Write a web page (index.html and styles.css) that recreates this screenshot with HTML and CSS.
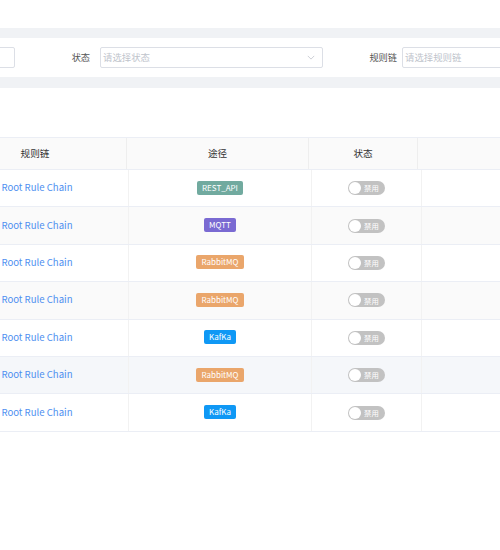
FILE: index.html
```html
<!DOCTYPE html>
<html lang="zh">
<head>
<meta charset="utf-8">
<title>规则链</title>
<link rel="stylesheet" href="styles.css">
</head>
<body>
<div class="page">
  <div class="top-space"></div>
  <div class="band band-a"></div>
  <div class="filters">
    <div class="select select-first"><span class="ph"></span></div>
    <label class="flabel flabel-1">状态</label>
    <div class="select"><span class="ph">请选择状态</span>
      <svg class="chev" viewBox="0 0 10 6" width="8" height="5"><path d="M1 1l4 4 4-4" fill="none" stroke="#c0c4cc" stroke-width="1"/></svg>
    </div>
    <label class="flabel flabel-2">规则链</label>
    <div class="select"><span class="ph">请选择规则链</span></div>
  </div>
  <div class="band band-b"></div>
  <div class="content">
    <div class="table">
      <div class="thead">
        <div class="th">规则链</div>
        <div class="th">途径</div>
        <div class="th">状态</div>
        <div class="th"></div>
      </div>
      <div class="tbody">
        <div class="tr">
          <div class="td"><span class="link">Root Rule Chain</span></div>
          <div class="td"><span class="tag tag-rest">REST_API</span></div>
          <div class="td"><span class="switch"><span class="knob"></span><span class="sw-text">禁用</span></span></div>
          <div class="td"></div>
        </div>
        <div class="tr stripe">
          <div class="td"><span class="link">Root Rule Chain</span></div>
          <div class="td"><span class="tag tag-mqtt">MQTT</span></div>
          <div class="td"><span class="switch"><span class="knob"></span><span class="sw-text">禁用</span></span></div>
          <div class="td"></div>
        </div>
        <div class="tr">
          <div class="td"><span class="link">Root Rule Chain</span></div>
          <div class="td"><span class="tag tag-rabbit">RabbitMQ</span></div>
          <div class="td"><span class="switch"><span class="knob"></span><span class="sw-text">禁用</span></span></div>
          <div class="td"></div>
        </div>
        <div class="tr stripe">
          <div class="td"><span class="link">Root Rule Chain</span></div>
          <div class="td"><span class="tag tag-rabbit">RabbitMQ</span></div>
          <div class="td"><span class="switch"><span class="knob"></span><span class="sw-text">禁用</span></span></div>
          <div class="td"></div>
        </div>
        <div class="tr">
          <div class="td"><span class="link">Root Rule Chain</span></div>
          <div class="td"><span class="tag tag-kafka">KafKa</span></div>
          <div class="td"><span class="switch"><span class="knob"></span><span class="sw-text">禁用</span></span></div>
          <div class="td"></div>
        </div>
        <div class="tr hover">
          <div class="td"><span class="link">Root Rule Chain</span></div>
          <div class="td"><span class="tag tag-rabbit">RabbitMQ</span></div>
          <div class="td"><span class="switch"><span class="knob"></span><span class="sw-text">禁用</span></span></div>
          <div class="td"></div>
        </div>
        <div class="tr">
          <div class="td"><span class="link">Root Rule Chain</span></div>
          <div class="td"><span class="tag tag-kafka">KafKa</span></div>
          <div class="td"><span class="switch"><span class="knob"></span><span class="sw-text">禁用</span></span></div>
          <div class="td"></div>
        </div>
      </div>
    </div>
  </div>
</div>
</body>
</html>
```
FILE: styles.css
```css
html, body {
  margin: 0;
  padding: 0;
  background: #ffffff;
}
body {
  font-family: "Noto Sans CJK SC", "Noto Sans", sans-serif;
  color: #333;
  width: 500px;
  height: 550px;
  overflow: hidden;
}
.page {
  width: 500px;
  overflow: hidden;
}
.top-space {
  height: 28px;
}
.band {
  background: #f0f2f5;
}
.band-a {
  height: 10px;
}
.band-b {
  height: 11px;
}
.filters {
  height: 39px;
  display: flex;
  align-items: center;
  margin-left: -208px;
  width: 900px;
}
.select {
  flex: none;
  width: 223px;
  height: 21px;
  box-sizing: border-box;
  border: 1px solid #dcdfe6;
  border-radius: 2px;
  display: flex;
  align-items: center;
  justify-content: space-between;
  padding: 0 7px 0 2px;
  background: #fff;
}
.ph {
  font-size: 9.4px;
  color: #c0c4cc;
  line-height: 1;
}
.chev {
  display: block;
}
.flabel {
  flex: none;
  box-sizing: border-box;
  text-align: right;
  font-size: 9.2px;
  color: #555;
  line-height: 1;
}
.flabel-1 {
  width: 85px;
  padding-right: 10px;
}
.flabel-2 {
  width: 79px;
  padding-right: 5px;
}
.content {
  padding-top: 49px;
}
.table {
  margin-left: -56px;
  width: 700px;
}
.thead {
  display: grid;
  grid-template-columns: 183px 182px 109px 1fr;
  height: 33px;
  box-sizing: border-box;
  border-top: 1px solid #ebeef5;
  border-bottom: 1px solid #ebeef5;
  background: #fafafa;
}
.th {
  display: flex;
  align-items: center;
  justify-content: center;
  font-size: 9.6px;
  color: #333;
  border-right: 1px solid #eeeeee;
  padding-bottom: 1px;
}
.tr {
  display: grid;
  grid-template-columns: 185px 183px 110px 1fr;
  height: 37.4px;
  box-sizing: border-box;
  border-bottom: 1px solid #ebeef5;
  background: #fff;
}
.tr.stripe {
  background: #fafafa;
}
.tr.hover {
  background: #f5f7fa;
}
.td {
  display: flex;
  align-items: center;
  justify-content: center;
  border-right: 1px solid #f2f2f2;
}
.link {
  font-size: 9.6px;
  color: #4e8ff0;
  margin-bottom: 2px;
  margin-left: 2px;
}
.tag {
  display: inline-block;
  height: 14px;
  line-height: 14px;
  padding: 0 5px;
  border-radius: 2px;
  color: #fff;
  font-size: 8px;
  font-family: "Noto Sans CJK SC", "Noto Sans", sans-serif;
  margin-bottom: 1px;
}
.tag-rest {
  background: #71aa9f;
}
.tag-mqtt {
  background: #7a6ad2;
}
.tag-rabbit {
  background: #eaa66b;
}
.tag-kafka {
  background: #0f98f5;
}
.switch {
  display: inline-flex;
  align-items: center;
  width: 37px;
  height: 14px;
  border-radius: 7px;
  background: #c2c2c2;
  box-sizing: border-box;
  padding-left: 1px;
  gap: 3px;
}
.knob {
  width: 12px;
  height: 12px;
  border-radius: 50%;
  background: #fff;
  flex: none;
}
.sw-text {
  color: #fff;
  font-size: 7.4px;
  line-height: 1;
}
```
